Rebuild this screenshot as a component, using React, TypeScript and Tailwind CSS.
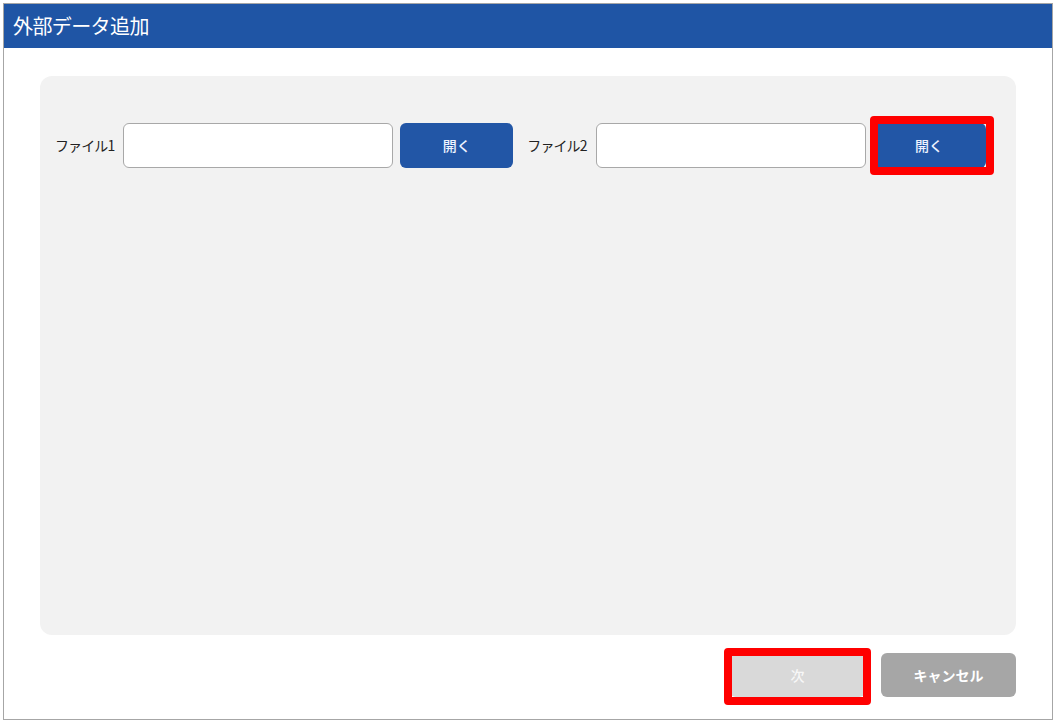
import React from "react";

const font = { fontFamily: '"Noto Sans CJK JP", "Noto Sans", sans-serif' };

function FileRow({ label, highlight }: { label: string; highlight?: boolean }) {
  return (
    <div className="flex items-center">
      <span className="text-[14px] text-[#222] tracking-[-0.9px] mr-[9px]">{label}</span>
      <div className="w-[270px] h-[45px] bg-white border border-[#a8a8a8] rounded-[6px]" />
      <div className="relative ml-[7px]">
        <button className="w-[113px] h-[45px] bg-[#2256a6] rounded-[6px] text-[14px] text-[#eef3ff] font-medium flex items-center justify-center">
          開く
        </button>
        {highlight && (
          <div className="absolute left-[-3px] right-[-8px] top-[-7px] bottom-[-7px] border-[8px] border-[#ff0000] rounded-[4px] pointer-events-none" />
        )}
      </div>
    </div>
  );
}

export default function App() {
  return (
    <div className="w-[1056px] h-[723px] bg-white pt-[3px] pl-[3px]" style={font}>
      <div className="w-[1050px] h-[717px] border border-[#a6a6a6] flex flex-col">
        <div className="h-[44px] bg-[#1f55a5] flex items-center pl-[9px] shrink-0">
          <span className="text-[20px] text-white tracking-[-0.6px]">外部データ追加</span>
        </div>
        <div className="flex-1 flex flex-col pl-[36px] pr-[36px] pt-[28px]">
          <div className="h-[559px] bg-[#f2f2f2] rounded-[12px] pt-[47px] pl-[15px] flex gap-[14px] items-start">
            <FileRow label="ファイル1" />
            <FileRow label="ファイル2" highlight />
          </div>
          <div className="flex justify-end gap-[16px] mt-[18px]">
            <div className="relative">
              <button className="w-[135px] h-[44px] bg-[#d9d9d9] rounded-[6px] text-[14px] text-[#f7f7f7] font-medium flex items-center justify-center">
                次
              </button>
              <div className="absolute left-[-6px] right-[-6px] top-[-5px] bottom-[-8px] border-[8px] border-[#ff0000] rounded-[4px] pointer-events-none" />
            </div>
            <button className="w-[135px] h-[44px] bg-[#a6a6a6] rounded-[6px] text-[14px] text-white font-bold flex items-center justify-center">
              キャンセル
            </button>
          </div>
        </div>
      </div>
    </div>
  );
}
